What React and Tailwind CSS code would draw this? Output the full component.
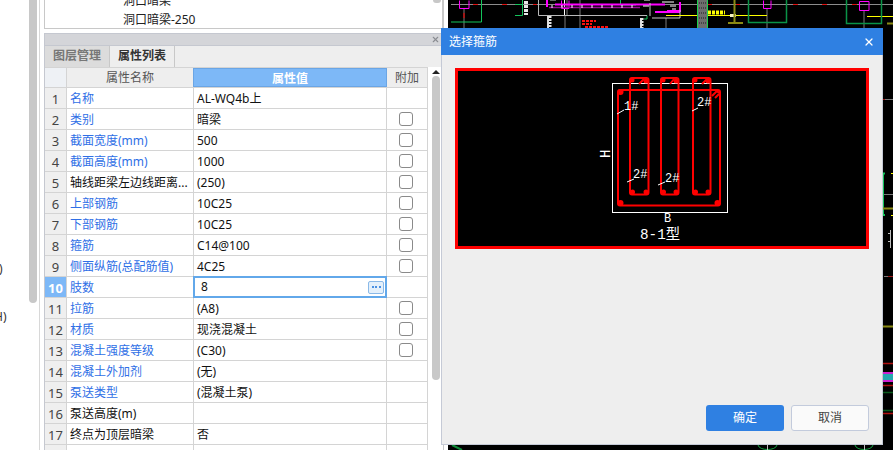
import React from 'react'
import { X } from 'lucide-react'

const rows = [
  { name: '名称', value: 'AL-WQ4b上', blue: true },
  { name: '类别', value: '暗梁', blue: true, check: true },
  { name: '截面宽度(mm)', value: '500', blue: true, check: true },
  { name: '截面高度(mm)', value: '1000', blue: true, check: true },
  { name: '轴线距梁左边线距离...', value: '(250)', check: true },
  { name: '上部钢筋', value: '10C25', blue: true, check: true },
  { name: '下部钢筋', value: '10C25', blue: true, check: true },
  { name: '箍筋', value: 'C14@100', blue: true, check: true },
  { name: '侧面纵筋(总配筋值)', value: '4C25', blue: true, check: true },
  { name: '肢数', value: '8', blue: true, active: true },
  { name: '拉筋', value: '(A8)', blue: true, check: true },
  { name: '材质', value: '现浇混凝土', blue: true, check: true },
  { name: '混凝土强度等级', value: '(C30)', blue: true, check: true },
  { name: '混凝土外加剂', value: '(无)', blue: true },
  { name: '泵送类型', value: '(混凝土泵)', blue: true },
  { name: '泵送高度(m)', value: '' },
  { name: '终点为顶层暗梁', value: '否' },
  { name: '', value: '' },
]

const PropertyRow = ({ row, index }) => (
  <div className="flex h-[21px] shrink-0 border-b border-[#d4d4d4] text-[12px] leading-[22px]">
    <div
      className={
        row.active
          ? 'w-[22px] shrink-0 border-r border-[#d4d4d4] bg-[#7db8f7] text-center text-[13px] font-bold text-white'
          : 'w-[22px] shrink-0 border-r border-[#d4d4d4] bg-[#efefef] text-center text-[13px] text-[#444]'
      }
    >
      {index + 1}
    </div>
    <div
      className={
        row.blue
          ? 'w-[127px] shrink-0 overflow-hidden border-r border-[#d4d4d4] pl-[3px] whitespace-nowrap text-[#2f6fe6]'
          : 'w-[127px] shrink-0 overflow-hidden border-r border-[#d4d4d4] pl-[3px] whitespace-nowrap text-[#111]'
      }
    >
      {row.name}
    </div>
    {row.active ? (
      <div className="-mt-px -ml-px flex h-[22px] w-[194px] shrink-0 items-center justify-between border-2 border-[#62a8ea] pr-[1px] pl-[6px] text-[#111]">
        <span>{row.value}</span>
        <span className="flex h-[13px] w-[16px] items-center justify-center gap-[1.5px] rounded-[2px] border border-[#8ab9e8] bg-[#e4f0fb]">
          <i className="h-[2px] w-[2px] bg-[#4a90e2]" />
          <i className="h-[2px] w-[2px] bg-[#4a90e2]" />
          <i className="h-[2px] w-[2px] bg-[#4a90e2]" />
        </span>
      </div>
    ) : (
      <div className="w-[193px] shrink-0 border-r border-[#d4d4d4] pl-[3px] text-[#111]">{row.value}</div>
    )}
    <div className="flex w-[41px] shrink-0 items-center justify-center border-r border-[#d4d4d4] pr-[2px]">
      {row.check && <span className="h-[14px] w-[14px] rounded-[3px] border border-[#8a8a8a] bg-white" />}
    </div>
  </div>
)

// cad plan behind the dialog, drawn in screen coordinates
const CadPlan = () => (
  <svg className="block" width="445" height="450" viewBox="448 0 445 450" fill="none">
    <path d="M451 4.5H893" stroke="#8c8c8c" />
    <path d="M473 4.5h5M502 4.5h5M533 4.5h4M708 4.5h4M736 4.5h4M793 4.5h5M822 4.5h5M852 4.5h5" stroke="#e01010" />
    <path d="M464 9V28M580 0V28M565 15V28M567 0V16M666 18V28M767 8V28M864 10V28" stroke="#7a7a7a" />
    <path d="M464 13v5" stroke="#a01818" strokeWidth="2" />
    <path d="M481.5 0V22H451M522.5 0V15.5H515M515 4.5H522" stroke="#13c45a" />
    <path d="M620.5 0V5H636M640 15.5H647V19H644" stroke="#13c45a" />
    <path d="M538.5 0V15.5H647" stroke="#b9b9b9" strokeWidth="1" />
    <path d="M564.5 0V15" stroke="#fff" />
    <path d="M459.5 0.5V8.5H469V0.5M561.5 0.5V8.5H569V0.5M763.5 0.5V8.5H771V0.5" stroke="#ff00ff" />
    <path d="M859.5 1.5H869V10.5H859.5Z" stroke="#ff00ff" />
    <path d="M547 0V7M555 4.5H665M667 11H680V2M655 12H680" stroke="#ff00ff" strokeWidth="2" />
    <path d="M549 7.5H640" stroke="#9a0a9a" strokeWidth="1.5" />
    <path d="M552 5v3M562 5v3M572 5v3M582 5v3M592 5v3M602 5v3M612 5v3M622 5v3M632 5v3" stroke="#fff" />
    <path d="M550 0H556M652 18H680V10M650 3V16" stroke="#c8c8c8" />
    <path d="M547 16h2v12h-2zM640 18h2v10h-2z" fill="#ddd" />
    <path d="M643 6h6M644 0h6M662 2h12M670 6h6M672 9h4" stroke="#fff" />
    <path d="M550 16V28M642 18V28" stroke="#e5e5e5" strokeDasharray="2 1" strokeWidth="3" />
    <path d="M526 1V15" stroke="#e8e8e8" strokeWidth="4" strokeDasharray="3 1" />
    <path d="M582 21h14M582 24h10M585 27h24" stroke="#ff1010" strokeWidth="2" strokeDasharray="3 1" />
    <path d="M666 15.5H767M867 16.5H893" stroke="#ffff00" />
    <path d="M708 12.5H725" stroke="#ffff00" strokeWidth="4" strokeDasharray="3 1" />
    <path d="M730 15.5h6" stroke="#f5f0c0" strokeWidth="3" />
    <rect x="698" y="0" width="9" height="28" fill="#6e6e6e" />
    <path d="M699 3h7M699 8h7M699 13h7M699 18h7M699 23h7" stroke="#1c1c1c" strokeDasharray="1 1" />
    <path d="M697.5 0V28M707.5 0V28" stroke="#19d24a" />
    <path d="M734.5 0V22M728 23H743M887 23.5H893" stroke="#8a8a14" strokeWidth="2" />
    <path d="M748.5 0V22.5H786.5V0M846.5 0V23.5H881.5V0" stroke="#0a9347" strokeWidth="1.5" />
    <path d="M883 99.5H885" stroke="#a01818" />
    <path d="M885 99.5H893M883 194.5H893M884 276.5H888" stroke="#7a7a7a" />
    <path d="M888 276.5H893" stroke="#a01818" />
    <path d="M885 173.5H883V215H885" stroke="#13c45a" strokeWidth="2" />
    <path d="M891 173.5H893M891 215.5H893" stroke="#ffff00" />
    <path d="M883 208.5H893M883 326.5H893" stroke="#8a8a14" strokeWidth="2" />
    <path d="M890.5 230V248M888 233.5H890M888 241.5H890" stroke="#bdbdbd" />
    <path d="M883 363.5H893M883 385.5H893M883 413.5H893" stroke="#b01010" strokeWidth="1.5" />
    <path d="M883 373H893M883 381H893" stroke="#d020d0" strokeWidth="2" />
    <rect x="883" y="374" width="10" height="6" fill="#25a8b0" />
    <path d="M883 392.5H893M883 410.5H893" stroke="#0a5a1c" strokeWidth="1.5" />
    <path d="M758 445c1 6 18 6 19 0M855 445c1 6 17 6 18 0" stroke="#13a040" />
    <path d="M767.5 445V450M864.5 445V450" stroke="#bdbdbd" />
    <path d="M452 445L462 450" stroke="#0f8a38" strokeWidth="2" />
  </svg>
)

// stirrup section inside the dialog, same screen coordinates
const StirrupSection = () => (
  <svg className="block" width="408" height="175" viewBox="458 71 408 175" fill="none">
    <rect x="612.5" y="83.5" width="115" height="129" stroke="#fff" />
    <rect x="618" y="90" width="102" height="115.5" rx="2" stroke="#ff0000" strokeWidth="2" />
    <rect x="630" y="78" width="18.5" height="116.5" rx="2" stroke="#ff0000" strokeWidth="2" />
    <rect x="661" y="78" width="17.5" height="116.5" rx="2" stroke="#ff0000" strokeWidth="2" />
    <rect x="693" y="78" width="17.5" height="116.5" rx="2" stroke="#ff0000" strokeWidth="2" />
    <g fill="#ff0000">
      <circle cx="620.5" cy="92" r="3" />
      <circle cx="620.5" cy="203" r="3" />
      <circle cx="717.5" cy="203" r="3" />
      <circle cx="632" cy="80" r="2.5" />
      <circle cx="646" cy="81" r="2.5" />
      <circle cx="663" cy="80" r="2.5" />
      <circle cx="676" cy="81" r="2.5" />
      <circle cx="695" cy="80" r="2.5" />
      <circle cx="708" cy="81" r="2.5" />
      <circle cx="632.5" cy="192" r="2.5" />
      <circle cx="646" cy="192" r="2.5" />
      <circle cx="663.5" cy="192" r="2.5" />
      <circle cx="676" cy="192" r="2.5" />
      <circle cx="695.5" cy="192" r="2.5" />
      <circle cx="708" cy="192" r="2.5" />
    </g>
    <path d="M712 96l5-5 2 2M715 98l4-4M639 84l5-5M670 84l4-5M702 84l5-5" stroke="#ff0000" strokeWidth="2" />
    <path d="M617 114l7-4M692 111l6-3M627 182l7-3M658 185l7-3" stroke="#fff" />
    <g fill="#fff" fontFamily="'Liberation Mono', monospace" fontSize="12">
      <text x="624" y="110">1#</text>
      <text x="697" y="106">2#</text>
      <text x="633" y="178">2#</text>
      <text x="665" y="182">2#</text>
      <text x="664" y="222" fontSize="12">B</text>
      <text x="0" y="0" fontSize="14" transform="translate(610 158) rotate(-90)">H</text>
      <text
        x="640"
        y="239"
        fontSize="15"
        textLength="40"
        lengthAdjust="spacingAndGlyphs"
        fontFamily="'Liberation Mono', 'Noto Sans CJK SC', monospace"
      >
        8-1型
      </text>
    </g>
  </svg>
)

const App = () => {
  return (
    <div className="relative flex h-[450px] w-[893px] overflow-hidden bg-white font-['Noto_Sans','Noto_Sans_CJK_SC',sans-serif]">
      {/* left strip, clipped text and scrollbar */}
      <div className="flex h-full w-[44px] shrink-0">
        <div className="w-[29px] shrink-0 overflow-hidden text-[12px] leading-[16px] text-[#333]">
          <div className="mt-[261px] -ml-[1px]">)</div>
          <div className="mt-[32px] -ml-[6px]">H)</div>
        </div>
        <div className="h-[303px] w-[8px] shrink-0 rounded-b-[4px] bg-[#c8c8c8]" />
        <div className="h-full w-[3px] shrink-0 border-r border-[#d8d8d8]" />
      </div>

      {/* property panels */}
      <div className="flex h-full w-[399px] shrink-0 flex-col">
        <div className="relative h-[29px] shrink-0 overflow-hidden border-x border-b border-[#c8c8c8] pl-[78px] text-[12px] leading-[16px] text-[#222]">
          <div className="-mt-[7px]">洞口暗梁</div>
          <div className="mt-[3px]">洞口暗梁-250</div>
          <div className="absolute top-0 right-[1px] h-[3px] w-[8px] rounded-b-[4px] bg-[#c8c8c8]" />
        </div>
        <div className="mt-[4px] flex min-h-0 flex-1 flex-col border-l border-t border-[#c5c8d0]">
          <div className="flex h-[11px] shrink-0 items-center justify-end bg-[#d4d5d9] pr-[3px]">
            <X size={9} strokeWidth={3} className="text-[#8a8d92]" />
          </div>
          <div className="flex h-[22px] shrink-0 border-t border-[#c5c8d0] bg-[#eeeeee] text-[12px] leading-[20px] font-bold">
            <div className="w-[65px] border-r border-[#c8c8c8] bg-[#dcdcdc] text-center text-[#777]">图层管理</div>
            <div className="w-[65px] border-r border-[#c8c8c8] text-center text-[#333]">属性列表</div>
          </div>
          <div className="flex min-h-0 flex-1">
            <div className="flex w-[383px] shrink-0 flex-col">
              <div className="flex h-[21px] shrink-0 border-y border-[#d4d4d4] bg-[#eeeeee] text-[12px] leading-[19px] text-[#555]">
                <div className="w-[22px] shrink-0 border-r border-[#d4d4d4] bg-[#eef1f5]" />
                <div className="w-[127px] shrink-0 border-r border-[#d4d4d4] text-center">属性名称</div>
                <div className="-ml-px w-[194px] shrink-0 border border-[#6aa5e5] bg-[#7db8f7] text-center font-bold text-white">属性值</div>
                <div className="w-[41px] shrink-0 border-r border-[#d4d4d4] text-center">附加</div>
              </div>
              {rows.map((row, i) => (
                <PropertyRow key={i} row={row} index={i} />
              ))}
            </div>
            <div className="flex flex-1 flex-col items-start pt-[3px] pl-[4px]">
              <div className="h-0 w-0 border-x-[4px] border-b-[4px] border-x-transparent border-b-[#222]" />
              <div className="mt-[2px] h-[304px] w-[8px] rounded-[4px] bg-[#c8c8c8]" />
            </div>
          </div>
        </div>
      </div>

      {/* thin gutter and cad canvas */}
      <div className="h-full w-[1px] shrink-0 bg-[#c8c8c8]" />
      <div className="h-full w-[4px] shrink-0 bg-white" />
      <div className="h-full flex-1 bg-black">
        <CadPlan />
      </div>

      {/* dialog */}
      <div className="absolute top-[28px] left-[441px] flex h-[417px] w-[442px] flex-col border-x border-b border-[#c5cad6] bg-[#eeeeee]">
        <div className="-mx-px flex h-[27px] shrink-0 items-center justify-between bg-[#2f80e2] pr-[8px] pl-[8px] text-[12px] text-white">
          <span>选择箍筋</span>
          <X size={12} strokeWidth={2.5} />
        </div>
        <div className="mx-[13px] mt-[13px] h-[181px] w-[414px] border-[3px] border-[#ff0000] bg-black">
          <StirrupSection />
        </div>
        <div className="mt-auto mr-[13px] mb-[13px] flex justify-end gap-[7px] text-[12px]">
          <button className="h-[26px] w-[78px] rounded-[3px] bg-[#2f80e2] text-white">确定</button>
          <button className="h-[26px] w-[78px] rounded-[3px] border border-[#c3cbdc] bg-[#fafafa] text-[#444]">取消</button>
        </div>
      </div>
    </div>
  )
}

export default App
